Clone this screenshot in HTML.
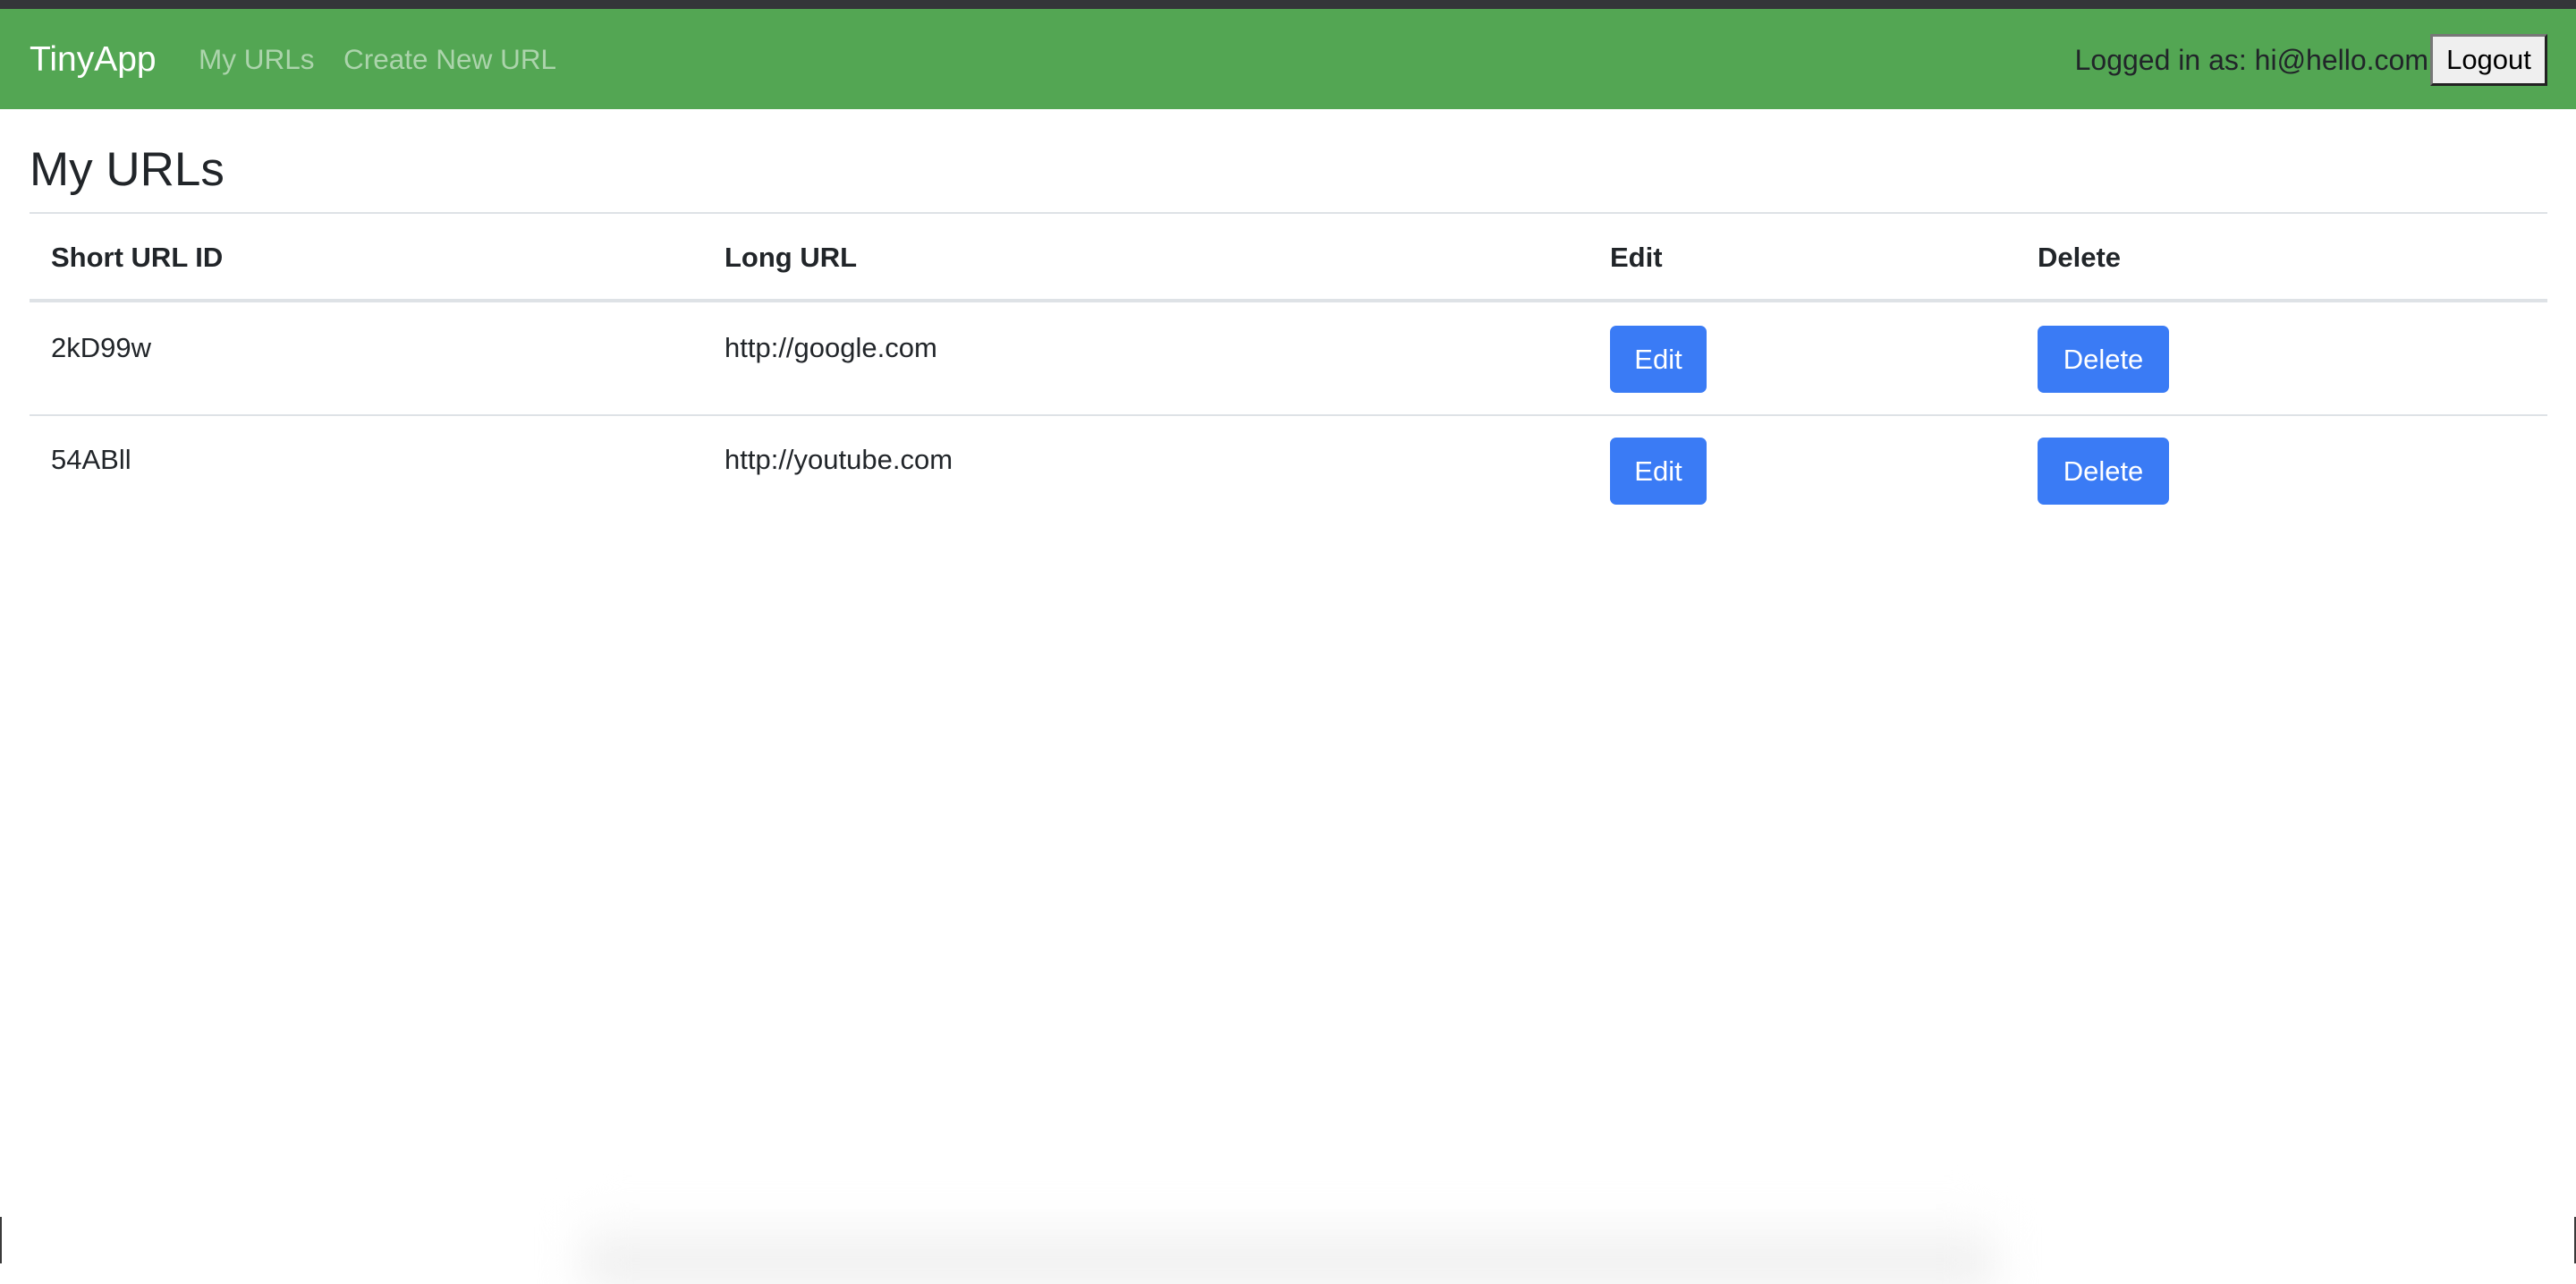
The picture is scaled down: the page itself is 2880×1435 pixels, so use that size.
<!DOCTYPE html>
<html><head><meta charset="utf-8"><style>
*{margin:0;padding:0;box-sizing:border-box}
html,body{width:2880px;height:1412px;overflow:hidden;background:#fff;font-family:"Liberation Sans",Arial,sans-serif;color:#212529}
.top{position:absolute;left:0;top:0;width:2880px;height:10px;background:#343539}
.nav{position:absolute;left:0;top:10px;width:2880px;height:112px;background:#53a653}
.t{position:absolute;white-space:nowrap;line-height:1}
.brand{left:33px;top:47px;font-size:39px;color:#fff}
.nl{top:51px;font-size:31.5px;color:#acd4ac}
.login{right:165px;top:51px;font-size:32px;color:#212529}
.logout{position:absolute;left:2717px;top:38px;width:131px;height:58px;background:#efefef;border:3px solid;border-color:#777 #222 #222 #777;font-size:31px;color:#000;text-align:center;line-height:52px}
h2{position:absolute;left:33px;top:163px;font-size:53px;font-weight:500;line-height:1}
.line{position:absolute;left:33px;width:2815px;background:#dee2e6}
.th{font-weight:bold;font-size:31px;top:272px}
.td{font-size:31px}
.btn{position:absolute;background:#3a7bf5;color:#fff;border-radius:7px;font-size:31px;text-align:center;line-height:75px;height:75px}
.edge{position:absolute;top:1360px;width:2px;height:52px;background:#3a3a3a}
.shadow{position:absolute;left:650px;top:1355px;width:1580px;height:80px;background:linear-gradient(#fff,#e8e8e8);filter:blur(24px)}
</style></head><body>
<div class="top"></div>
<div class="nav"></div>
<div class="t brand">TinyApp</div>
<div class="t nl" style="left:222px">My URLs</div>
<div class="t nl" style="left:384px">Create New URL</div>
<div class="t login">Logged in as: hi@hello.com</div>
<div class="logout">Logout</div>
<h2>My URLs</h2>
<div class="line" style="top:237px;height:2px"></div>
<div class="t th" style="left:57px">Short URL ID</div>
<div class="t th" style="left:810px">Long URL</div>
<div class="t th" style="left:1800px">Edit</div>
<div class="t th" style="left:2278px">Delete</div>
<div class="line" style="top:334px;height:4px"></div>
<div class="t td" style="left:57px;top:373px">2kD99w</div>
<div class="t td" style="left:810px;top:373px">http://google.com</div>
<div class="btn" style="left:1800px;top:364px;width:108px">Edit</div>
<div class="btn" style="left:2278px;top:364px;width:147px">Delete</div>
<div class="line" style="top:463px;height:2px"></div>
<div class="t td" style="left:57px;top:498px">54ABll</div>
<div class="t td" style="left:810px;top:498px">http://youtube.com</div>
<div class="btn" style="left:1800px;top:489px;width:108px">Edit</div>
<div class="btn" style="left:2278px;top:489px;width:147px">Delete</div>
<div class="shadow"></div>
<div class="edge" style="left:0"></div>
<div class="edge" style="right:0"></div>
</body></html>
